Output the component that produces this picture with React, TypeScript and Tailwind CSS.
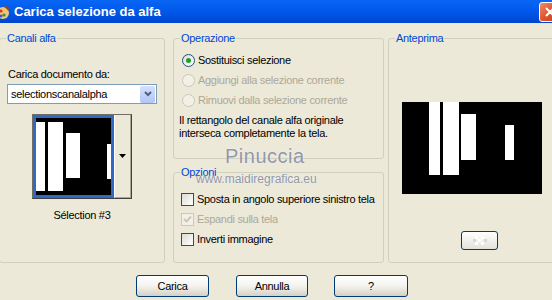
import React from 'react';

const font = "font-['Liberation_Sans',Arial,sans-serif]";

interface GroupProps {
  label: string;
  className?: string;
  children?: React.ReactNode;
}

function Group({ label, className = '', children }: GroupProps) {
  return (
    <fieldset className={`rounded-[3px] border border-[#D0D0BF] ${className}`}>
      <legend className="ml-[6px] px-[1px] text-[11px] leading-[14px] text-[#0046D5]">{label}</legend>
      {children}
    </fieldset>
  );
}

function Radio({ checked, disabled, label }: { checked?: boolean; disabled?: boolean; label: string }) {
  return (
    <div className="flex h-[20px] items-center gap-[3px] whitespace-nowrap">
      <span
        className={`flex h-[13px] w-[13px] shrink-0 items-center justify-center rounded-full border ${
          disabled ? 'border-[#CAC8BB] bg-[#F3F1E6]' : 'border-[#1C5180] bg-linear-to-br from-[#DCDCD5] to-white'
        }`}
      >
        {checked ? <span className="h-[5px] w-[5px] rounded-full bg-[#21A121]" /> : null}
      </span>
      <span className={disabled ? 'text-[#ACA899]' : 'text-black'}>{label}</span>
    </div>
  );
}

function Check({ checked, disabled, label }: { checked?: boolean; disabled?: boolean; label: string }) {
  return (
    <div className="flex h-[20px] items-center gap-[3px] whitespace-nowrap">
      <span
        className={`flex h-[13px] w-[13px] shrink-0 items-center justify-center border ${
          disabled ? 'border-[#CAC8BB] bg-[#F3F1E6]' : 'border-[#1C5180] bg-linear-to-br from-[#DCDCD5] to-white'
        }`}
      >
        {checked ? (
          <svg width="9" height="9" viewBox="0 0 9 9">
            <path d="M1 4 L3.5 6.5 L8 1.5" fill="none" stroke={disabled ? '#CAC8BB' : '#21A121'} strokeWidth="2" />
          </svg>
        ) : null}
      </span>
      <span className={disabled ? 'text-[#ACA899]' : 'text-black'}>{label}</span>
    </div>
  );
}

function XpButton({ label, className = '' }: { label: string; className?: string }) {
  return (
    <button
      type="button"
      className={`flex h-[22px] items-center justify-center rounded-[3px] border border-[#003C74] bg-linear-to-b from-white via-[#F4F3EE] to-[#D6D0C5] text-[11px] text-black ${className}`}
    >
      {label}
    </button>
  );
}

export default function App() {
  return (
    <div className={`relative h-[300px] w-[552px] overflow-hidden bg-[#ECE9D8] text-[11px] leading-[13px] tracking-[-0.3px] ${font}`}>
      {/* title bar */}
      <div className="flex h-[23px] items-center bg-linear-to-b from-[#0A66F4] via-[#0058EA] to-[#0045CF] tracking-normal">
        <svg width="12" height="16" viewBox="0 0 12 16" className="ml-[-2px]">
          <ellipse cx="5" cy="9" rx="6" ry="6" fill="#F2C27A" />
          <circle cx="3" cy="7" r="1.6" fill="#D7362B" />
          <circle cx="6" cy="11" r="1.6" fill="#2F8F35" />
          <circle cx="3" cy="12" r="1.4" fill="#2C5BD8" />
          <path d="M7 2 L11 6" stroke="#8B4A1C" strokeWidth="2" />
        </svg>
        <span className="ml-[4px] text-[13px] font-bold text-white">Carica selezione da alfa</span>
        <div className="ml-auto mr-[-8px] flex h-[20px] w-[21px] items-center justify-center rounded-[3px] border border-white bg-linear-to-br from-[#F08A68] via-[#E0542E] to-[#C7391B]">
          <svg width="10" height="10" viewBox="0 0 10 10">
            <path d="M1 1 L9 9 M9 1 L1 9" stroke="white" strokeWidth="2" />
          </svg>
        </div>
      </div>

      {/* groups */}
      <div className="flex pt-[8px]">
        <Group label="Canali alfa" className="ml-[-1px] h-[232px] w-[166px] shrink-0">
          <div className="mt-[23px] pl-[8px]">Carica documento da:</div>
          <div className="ml-[7px] mt-[3px] flex h-[20px] w-[150px] items-center border border-[#7F9DB9] bg-white">
            <span className="flex-1 pl-[3px]">selectionscanalalpha</span>
            <span className="mr-[1px] flex h-[17px] w-[15px] items-center justify-center rounded-[2px] bg-linear-to-b from-[#D4E0FC] to-[#B2C6F4]">
              <svg width="8" height="6" viewBox="0 0 8 6">
                <path d="M1 1 L4 4 L7 1" fill="none" stroke="#4D6185" strokeWidth="2" />
              </svg>
            </span>
          </div>
          <div className="ml-[32px] mt-[10px] flex h-[85px] w-[100px] border border-t-[#716F64] border-l-[#716F64] border-r-[#404040] border-b-[#404040]">
            <div className="h-[83px] w-[81px] border-[3px] border-[#316AC5] bg-black">
              <svg width="75" height="77" viewBox="0 0 75 77" className="block">
                <rect x="0" y="4" width="9" height="69" fill="white" />
                <rect x="12" y="4" width="15" height="69" fill="white" />
                <rect x="30" y="15" width="14" height="45" fill="white" />
                <rect x="71" y="26" width="4" height="35" fill="white" />
              </svg>
            </div>
            <div className="flex flex-1 items-center justify-center border-l border-l-white border-r border-r-[#ACA899] border-b border-b-[#ACA899] bg-[#ECE9D8]">
              <svg width="7" height="4" viewBox="0 0 7 4">
                <path d="M0 0 L7 0 L3.5 4 Z" fill="black" />
              </svg>
            </div>
          </div>
          <div className="mt-[10px] text-center">Sélection #3</div>
        </Group>

        <div className="ml-[8px] flex w-[211px] shrink-0 flex-col">
          <Group label="Operazione" className="h-[128px]">
            <div className="mt-[5px] pl-[8px]">
              <Radio checked label="Sostituisci selezione" />
              <Radio disabled label="Aggiungi alla selezione corrente" />
              <Radio disabled label="Rimuovi dalla selezione corrente" />
            </div>
            <div className="mt-[4px] whitespace-nowrap pl-[5px]">
              Il rettangolo del canale alfa originale
              <br />
              interseca completamente la tela.
            </div>
          </Group>
          <Group label="Opzioni" className="mt-[6px] h-[98px]">
            <div className="mt-[10px] pl-[7px]">
              <Check label="Sposta in angolo superiore sinistro tela" />
              <Check checked disabled label="Espandi sulla tela" />
              <Check label="Inverti immagine" />
            </div>
          </Group>
        </div>

        <Group label="Anteprima" className="ml-[4px] h-[232px] w-[168px] shrink-0">
          <svg width="140" height="92" viewBox="0 0 140 92" className="ml-[13px] mt-[57px] block">
            <rect width="140" height="92" fill="black" />
            <rect x="27" y="0" width="11" height="73" fill="white" />
            <rect x="41" y="0" width="16" height="73" fill="white" />
            <rect x="59" y="12" width="15" height="46" fill="white" />
            <rect x="103" y="23" width="9" height="35" fill="white" />
          </svg>
          <div className="ml-[72px] mt-[37px] flex h-[19px] w-[37px] items-center justify-center rounded-[3px] border border-[#003C74] bg-linear-to-b from-white to-[#E3E1D9]">
            <svg width="14" height="10" viewBox="0 0 14 10">
              <rect x="2" y="0" width="3" height="3" fill="#FFFFFF" />
              <rect x="8" y="0" width="3" height="3" fill="#FFFFFF" />
              <rect x="5" y="3" width="3" height="3" fill="#FFFFFF" />
              <rect x="2" y="6" width="3" height="3" fill="#FFFFFF" />
              <rect x="8" y="6" width="3" height="3" fill="#FFFFFF" />
              <rect x="0" y="3" width="3" height="3" fill="#D9D7CE" />
              <rect x="11" y="3" width="3" height="3" fill="#D9D7CE" />
            </svg>
          </div>
        </Group>
      </div>

      {/* buttons */}
      <div className="mt-[12px] flex">
        <XpButton label="Carica" className="ml-[136px] w-[73px]" />
        <XpButton label="Annulla" className="ml-[27px] w-[72px]" />
        <XpButton label="?" className="ml-[26px] w-[74px]" />
      </div>

      {/* watermark */}
      <div className="pointer-events-none absolute left-[225px] top-[145px] text-[20px] leading-[22px] tracking-[0.5px] text-[#7C849E] opacity-80 [text-shadow:0_0_2px_white]">
        Pinuccia
      </div>
      <div className="pointer-events-none absolute left-[196px] top-[172px] text-[12px] leading-[14px] tracking-normal text-[#7C849E] opacity-80 [text-shadow:0_0_2px_white]">
        www.maidiregrafica.eu
      </div>
    </div>
  );
}
